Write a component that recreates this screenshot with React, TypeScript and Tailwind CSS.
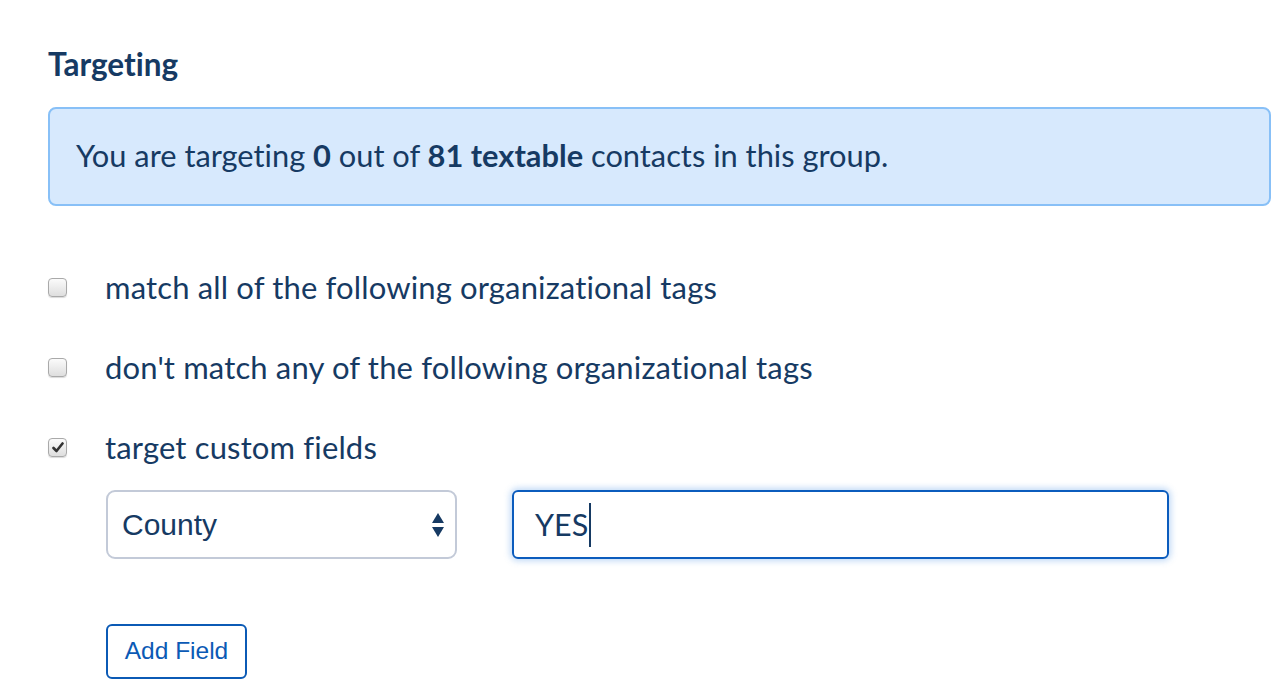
import { useState } from "react";

const tagOptions = [
  { label: "match all of the following organizational tags", checked: false },
  { label: "don't match any of the following organizational tags", checked: false },
  { label: "target custom fields", checked: true },
];

const Check = ({ checked }: { checked: boolean }) => (
  <div className="w-[19px] h-[19px] rounded-[4px] border border-[#a9a9a9] bg-gradient-to-b from-[#fbfbfb] to-[#dedede] shadow-[0_1px_1px_rgba(0,0,0,0.15)] flex items-center justify-center">
    {checked && (
      <svg width="12" height="11" viewBox="0 0 12 11">
        <path d="M1.5 6 L4.5 9 L10.5 1.5" fill="none" stroke="#333" strokeWidth="2.6" strokeLinecap="round" strokeLinejoin="round" />
      </svg>
    )}
  </div>
);

const App = () => {
  const [value] = useState("YES");

  return (
    <div className="bg-white w-[1288px] h-[696px] pl-[48px] pr-[17px] pt-[46px] text-[#163a63] font-['Lato',sans-serif] [font-variant-ligatures:none]">
      <div className="text-[31.5px] font-bold leading-[36px]">Targeting</div>
      <div className="mt-[25px] h-[99px] border-2 border-[#88c0f7] bg-[#d7e9fd] rounded-[8px] pl-[26px] flex items-center text-[30.8px]">
        <span>
          You are targeting <b>0</b> out of <b>81 textable</b> contacts in this group.
        </span>
      </div>
      <div className="mt-[63px] flex flex-col gap-[44px]">
        {tagOptions.map((item) => (
          <div key={item.label} className="flex items-center h-[36px]">
            <Check checked={item.checked} />
            <div className="ml-[38px] text-[31px] tracking-[0.15px]">{item.label}</div>
          </div>
        ))}
      </div>
      <div className="mt-[25px] ml-[58px] flex gap-[55px]">
        <div className="w-[351px] h-[69px] border-2 border-[#c3cad8] rounded-[9px] flex items-center justify-between pl-[14px] pr-[10px] font-['Liberation_Sans',sans-serif] text-[30px]">
          <span>County</span>
          <svg width="14" height="28" viewBox="0 0 14 28">
            <path d="M7 2 L13 12 L1 12 Z" fill="#163a63" />
            <path d="M1 16 L13 16 L7 26 Z" fill="#163a63" />
          </svg>
        </div>
        <div className="w-[657px] h-[69px] border-2 border-[#0b5cbd] rounded-[6px] shadow-[0_0_6px_2px_rgba(80,150,230,0.35)] flex items-center pl-[21px] text-[30.5px]">
          <span>{value}</span>
          <span className="ml-[1px] w-[1.5px] h-[44px] bg-[#163a63]"></span>
        </div>
      </div>
      <button className="mt-[65px] ml-[58px] w-[141px] h-[55px] border-2 border-[#0b5ab5] rounded-[6px] text-[#0b5ab5] text-[24.5px] font-['Liberation_Sans',sans-serif]">
        Add Field
      </button>
    </div>
  );
};

export default App;
